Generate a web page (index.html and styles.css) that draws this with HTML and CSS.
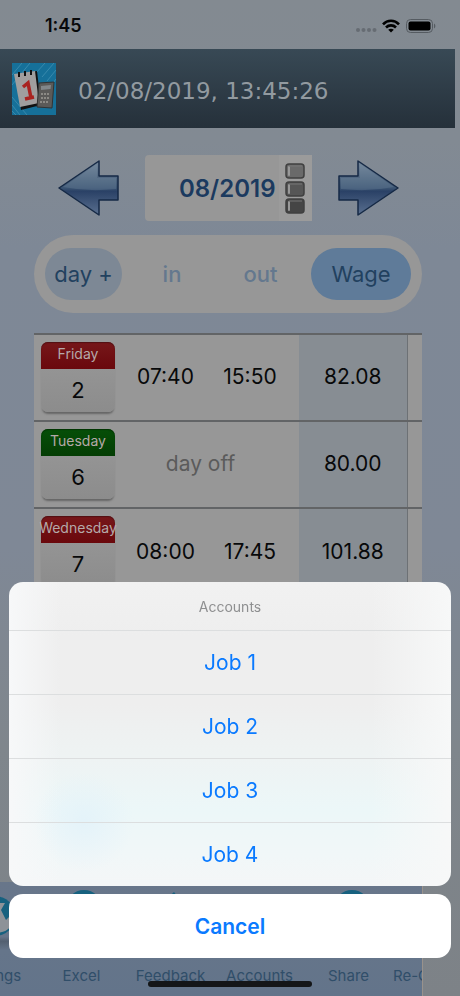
FILE: index.html
```html
<!DOCTYPE html>
<html lang="en">
<head>
    <meta charset="UTF-8">
    <meta name="viewport" content="width=device-width, initial-scale=1.0">
    <title>Work log</title>
    <link rel="stylesheet" href="styles.css">
</head>
<body>
    <div class="app">
        <div class="status-bar">
            <span class="status-time">1:45</span>
            <div class="status-icons">
                <svg width="22" height="6" viewBox="0 0 22 6" fill="#666c73">
                    <circle cx="3" cy="3" r="2"/><circle cx="8.5" cy="3" r="2"/><circle cx="14" cy="3" r="2"/><circle cx="19.500" cy="3" r="2"/>
                </svg>
                <svg class="wifi" width="18" height="14" viewBox="0 0 18 14" fill="none" stroke="#000" stroke-width="2.600">
                    <path d="M1 5.300C5.500 .6 12.500 .6 17 5.300"/>
                    <path d="M4 8.500C6.800 5.700 11.200 5.700 14 8.500"/>
                    <path d="M9 13.500L6.200 10.700C7.800 9.300 10.200 9.300 11.800 10.700Z" fill="#000" stroke="none"/>
                </svg>
                <svg class="battery" width="30" height="14" viewBox="0 0 30 14">
                    <rect x=".5" y=".5" width="26" height="13" rx="4" fill="none" stroke="#555b61"/>
                    <rect x="2.500" y="2.500" width="22" height="9" rx="2" fill="#000"/>
                    <path d="M28 4.500C29.800 5.300 29.800 8.700 28 9.500Z" fill="#555b61"/>
                </svg>
            </div>
        </div>

        <header class="header">
            <svg class="logo" width="44" height="52" viewBox="0 0 44 52">
                <rect width="44" height="52" fill="#167099"/>
                <path d="M0 12L10 0M0 22L18 0M24 10L33 0M30 14L42 0M35 18L44 7M38 24L44 16M0 42L8 52M0 34L15 52M0 48L4 52" stroke="#3889ad" stroke-width="1"/>
                <path d="M3 12L25 8L29 42L9 47Z" fill="#111"/>
                <path d="M2 11L23 8L27 40L8 44Z" fill="#a09e9e"/>
                <path d="M7 9v5M13 8v5M19 7v5" stroke="#111" stroke-width="2"/>
                <path d="M11 24L16 20L19 35M13 36L22 34" fill="none" stroke="#a92320" stroke-width="3.500"/>
                <path d="M27 20L42 19L40 45L25 44Z" fill="#5b5a58" stroke="#333" stroke-width="1"/>
                <path d="M29 23L39 22L38.500 26L29 27Z" fill="#82878a"/>
                <path d="M29 31h9M29 35h9M28 39h9" stroke="#8c8a85" stroke-width="2" stroke-dasharray="2 1"/>
            </svg>
            <span class="clock">02/08/2019, 13:45:26</span>
        </header>

        <main class="content">
            <div class="month-nav">
                <button class="arrow" aria-label="Previous month">
                    <svg width="62" height="58" viewBox="0 0 62 58">
                        <defs>
                            <linearGradient id="arrowFill" x1="0" y1="0" x2="0" y2="1">
                                <stop offset="0" stop-color="#748699"/>
                                <stop offset=".5" stop-color="#3b5472"/>
                                <stop offset=".56" stop-color="#2a4166"/>
                                <stop offset="1" stop-color="#5a7090"/>
                            </linearGradient>
                        </defs>
                        <path d="M1 29L41 2V17H60V41H41V56Z" fill="url(#arrowFill)" stroke="#152945" stroke-width="1.500" stroke-linejoin="round"/>
                        <path d="M5 28L39 5V19H58V30Q30 33 5 28Z" fill="#8096aa" opacity=".25"/>
                    </svg>
                </button>
                <button class="month">
                    <span class="month-label">08/2019</span>
                    <span class="month-grip">
                        <svg width="20" height="52" viewBox="0 0 20 52">
                            <g stroke="#404040" stroke-width="1.500">
                                <rect x="1" y="1" width="18" height="14" rx="3" fill="#6a6a6a"/>
                                <rect x="1" y="19" width="18" height="14" rx="3" fill="#565656"/>
                                <rect x="1" y="36" width="18" height="14" rx="3" fill="#454545"/>
                            </g>
                            <path d="M4 4v8M4 22v8M4 39v8" stroke="#999" stroke-width="2" stroke-linecap="round"/>
                            <path d="M4 3h13M4 21h13M4 38h13" stroke="#777" stroke-width="1"/>
                        </svg>
                    </span>
                </button>
                <button class="arrow" aria-label="Next month">
                    <svg width="62" height="58" viewBox="0 0 62 58">
                        <path d="M61 29L21 2V17H2V41H21V56Z" fill="url(#arrowFill)" stroke="#152945" stroke-width="1.500" stroke-linejoin="round"/>
                        <path d="M57 28L23 5V19H4V30Q32 33 57 28Z" fill="#8096aa" opacity=".25"/>
                    </svg>
                </button>
            </div>

            <div class="filters">
                <button class="filter filter-day">day +</button>
                <button class="filter filter-in">in</button>
                <button class="filter filter-out">out</button>
                <button class="filter filter-wage">Wage</button>
            </div>

            <table class="log">
                <tr>
                    <td class="col-date"><div class="cal"><div class="cal-day">Friday</div><div class="cal-num">2</div></div></td>
                    <td class="col-in">07:40</td>
                    <td class="col-out">15:50</td>
                    <td class="col-wage">82.08</td>
                    <td class="col-more"></td>
                </tr>
                <tr>
                    <td class="col-date"><div class="cal cal-green"><div class="cal-day">Tuesday</div><div class="cal-num">6</div></div></td>
                    <td class="col-off" colspan="2">day off</td>
                    <td class="col-wage">80.00</td>
                    <td class="col-more"></td>
                </tr>
                <tr>
                    <td class="col-date"><div class="cal"><div class="cal-day">Wednesday</div><div class="cal-num">7</div></div></td>
                    <td class="col-in">08:00</td>
                    <td class="col-out">17:45</td>
                    <td class="col-wage">101.88</td>
                    <td class="col-more"></td>
                </tr>
            </table>
        </main>

        <nav class="tab-bar">
            <a class="tab" href="#settings">
                <svg width="44" height="52" viewBox="0 0 44 52">
                    <circle cx="24" cy="28" r="20" fill="#17617f"/>
                    <path d="M24 15H34L30 22L35 32L43 24C45 38 36 45 24 45Z" fill="#8d9298"/>
                </svg>
                Settings
            </a>
            <a class="tab" href="#excel">
                <svg width="44" height="52" viewBox="0 0 44 52">
                    <circle cx="24" cy="20" r="18" fill="#17617f"/>
                    <path d="M16 12L32 30M32 12L16 30" stroke="#8d9298" stroke-width="4"/>
                </svg>
                Excel
            </a>
            <a class="tab" href="#feedback">
                <svg width="44" height="52" viewBox="0 0 44 52">
                    <path d="M25 4L40 24L22 42L4 24Z" fill="#17617f"/>
                </svg>
                Feedback
            </a>
            <a class="tab" href="#accounts">
                <svg width="44" height="52" viewBox="0 0 44 52">
                    <circle cx="22" cy="30" r="18" fill="#17617f"/>
                </svg>
                Accounts
            </a>
            <a class="tab" href="#share">
                <svg width="44" height="52" viewBox="0 0 44 52">
                    <circle cx="25" cy="20" r="18" fill="#17617f"/>
                    <path d="M16 22L32 12M16 22L32 30" stroke="#8d9298" stroke-width="3"/>
                </svg>
                Share
            </a>
            <a class="tab" href="#recalculate">
                <svg width="44" height="52" viewBox="0 0 44 52">
                    <circle cx="22" cy="30" r="18" fill="#17617f"/>
                </svg>
                Re-Calculate
            </a>
        </nav>
    </div>

    <!-- account picker -->
    <div class="sheet" role="dialog" aria-labelledby="sheet-title">
        <div class="sheet-list">
            <div class="sheet-title" id="sheet-title">Accounts</div>
            <button class="sheet-item">Job 1</button>
            <button class="sheet-item">Job 2</button>
            <button class="sheet-item">Job 3</button>
            <button class="sheet-item">Job 4</button>
        </div>
        <button class="sheet-cancel">Cancel</button>
    </div>
    <div class="home-indicator"></div>
</body>
</html>
```
FILE: styles.css
```css
* {
    box-sizing: border-box;
}

body {
    margin: 0;
    font-family: Inter, "Liberation Sans", sans-serif;
    color: #08090a;
}

button {
    font-family: inherit;
    border: none;
    background: none;
    padding: 0;
    cursor: pointer;
}

svg {
    display: block;
}

.app {
    display: flex;
    flex-direction: column;
    height: 100vh;
    overflow: hidden;
    background: linear-gradient(#838a91 0, #828a93 14%, #7e8896 25%, #7f8896 55%, #7f868c 75%, #7d8287 100%);
}

.status-bar {
    display: flex;
    justify-content: space-between;
    align-items: center;
    height: 49px;
    padding: 2px 24px 0 45px;
    flex-shrink: 0;
}

.status-time {
    font-size: 18px;
    font-weight: 600;
}

.status-icons {
    display: flex;
    align-items: center;
}

.status-icons svg:first-child {
    margin-top: 8px;
}

.wifi {
    margin: 0 6px 0 5px;
}

.header {
    display: flex;
    align-items: center;
    height: 79px;
    margin-right: 5px;
    padding-left: 12px;
    flex-shrink: 0;
    background: linear-gradient(#384955, #25303a);
}

.clock {
    margin-left: 22px;
    font-family: "DejaVu Sans", sans-serif;
    font-size: 23px;
    line-height: 28px;
    padding-top: 5px;
    color: #929aa0;
}

.content {
    flex: 1;
    min-height: 0;
    overflow: hidden;
    padding: 27px 38px 0 34px;
}

.month-nav {
    display: flex;
    justify-content: center;
    align-items: center;
    gap: 25px;
}

.month {
    display: flex;
    justify-content: flex-end;
    width: 167px;
    height: 66px;
    background: #979797;
    border-radius: 4px 0 0 4px;
}

.month-label {
    align-self: center;
    margin-right: 3px;
    font-size: 24px;
    font-weight: 600;
    color: #1b3a5f;
}

.month-grip {
    display: flex;
    align-items: center;
    justify-content: center;
    height: 66px;
    width: 33px;
    padding-top: 2px;
    background: #9b9b9b;
}

.filters {
    display: flex;
    align-items: center;
    height: 78px;
    margin: 14px 0 20px;
    padding: 0 11px;
    border-radius: 39px;
    background: #979797;
}

.filter {
    height: 52px;
    font-size: 22px;
    color: #64788e;
    border-radius: 26px;
}

.filter-day {
    width: 77px;
    background: #7d8895;
    color: #22415f;
}

.filter-in {
    flex: 100;
    font-weight: 500;
}

.filter-out {
    flex: 77;
    margin-right: 12px;
    font-weight: 500;
}

.filter-wage {
    width: 100px;
    background: #5f7b99;
    color: #22415f;
}

.log {
    width: 100%;
    table-layout: fixed;
    border-collapse: collapse;
    background: #979797;
}

.log td {
    height: 87px;
    padding: 0 0 2px;
    border-top: 2px solid #626466;
    text-align: center;
    font-size: 21px;
}

.log .col-date {
    width: 86px;
    padding-left: 7px;
}

.log .col-in {
    width: 91px;
}

.log .col-off {
    color: #5b5b5b;
    padding-right: 18px;
}

.log .col-out {
    padding-right: 10px;
}

.log .col-wage {
    width: 108px;
    background: #878d93;
    border-right: 1px solid #6d7175;
}

.log .col-more {
    width: 15px;
}

.cal {
    width: 74px;
    height: 70px;
    border-radius: 7px;
    background: linear-gradient(#999, #8c8c8c);
    box-shadow: 0 3px 2px -1px #666;
}

.cal-day {
    display: flex;
    justify-content: center;
    height: 27px;
    border-radius: 7px 7px 0 0;
    background: linear-gradient(#76171a, #6a080c);
    box-shadow: inset 0 1px 1px #511013;
    font-size: 14px;
    line-height: 24px;
    color: #b5a9a9;
}

.cal-green .cal-day {
    background: linear-gradient(#064f08, #043d04);
    box-shadow: inset 0 1px 1px #023303;
}

.cal-num {
    font-size: 22px;
    line-height: 42px;
}

.tab-bar {
    display: flex;
    flex-shrink: 0;
    height: 114px;
    margin-right: 37px;
    padding-top: 6px;
    overflow: hidden;
    border-right: 1px solid #99928c;
    background: linear-gradient(#68768a 0, #66758a 48%, #536070 52%, #65758a 60%, #63748a 100%);
}

.tab {
    display: flex;
    flex-direction: column;
    align-items: center;
    gap: 24px;
    flex: 0 0 89px;
    font-size: 15px;
    line-height: 24px;
    white-space: nowrap;
    color: #304e69;
    text-decoration: none;
}

/* the bar is scrolled past the first tab */
.tab:first-child {
    margin-left: -52px;
}

.sheet {
    position: fixed;
    left: 9px;
    right: 9px;
    bottom: 38px;
    display: flex;
    flex-direction: column;
    gap: 8px;
}

.sheet-list {
    border-radius: 14px;
    overflow: hidden;
    background:
        radial-gradient(circle at 75px 240px, rgba(222, 240, 250, 0.6), rgba(222, 240, 250, 0) 50px),
        linear-gradient(90deg, #f7f8f9 0, rgba(247, 248, 249, 0) 12%, rgba(247, 248, 249, 0) 82%, #f7f8f8 100%),
        linear-gradient(#f1f1f1 0, #eee 18%, #eee 40%, #eef3f3 58%, #ecf7f8 75%, #f1f7f8 90%, #f4f6f7 100%);
}

.sheet-title {
    height: 48px;
    line-height: 50px;
    text-align: center;
    font-size: 14px;
    color: #8e8f90;
}

.sheet-item {
    display: block;
    width: 100%;
    height: 64px;
    border-top: 1px solid #dcdedf;
    font-size: 21px;
    color: #0a7aff;
}

.sheet-cancel {
    height: 64px;
    border-radius: 14px;
    background: #fff;
    font-size: 21px;
    font-weight: 600;
    color: #0a7aff;
}

.home-indicator {
    position: fixed;
    left: 50%;
    bottom: 9px;
    width: 164px;
    height: 6px;
    margin-left: -82px;
    border-radius: 3px;
    background: #141618;
}
```
